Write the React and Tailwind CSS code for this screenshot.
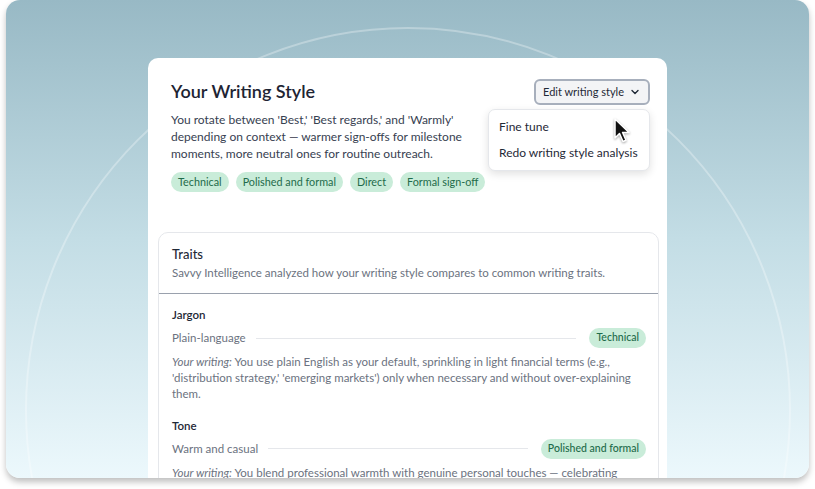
import React from 'react';

const font = { fontFamily: '"Lato", "Noto Sans", sans-serif' };

const tags = ['Technical', 'Polished and formal', 'Direct', 'Formal sign-off'];

const traits = [
    {
        name: 'Jargon',
        low: 'Plain-language',
        high: 'Technical',
        text: "You use plain English as your default, sprinkling in light financial terms (e.g., 'distribution strategy,' 'emerging markets') only when necessary and without over-explaining them.",
    },
    {
        name: 'Tone',
        low: 'Warm and casual',
        high: 'Polished and formal',
        text: 'You blend professional warmth with genuine personal touches — celebrating milestones and checking in on people as well as projects.',
    },
];

function Pointer() {
    return (
        <svg width="20" height="26" viewBox="0 0 20 26" className="drop-shadow-[0_1px_1px_rgba(0,0,0,0.35)]">
            <path d="M2 1 L2 20 L6.5 15.5 L10 23.5 L13 22.2 L9.6 14.4 L16 14.4 Z" fill="#111" stroke="#fff" strokeWidth="1.5" strokeLinejoin="round" />
        </svg>
    );
}

function Chevron() {
    return (
        <svg width="10" height="10" viewBox="0 0 10 10" fill="none">
            <path d="M2 3.5 L5 6.5 L8 3.5" stroke="#1f2937" strokeWidth="1.4" strokeLinecap="round" strokeLinejoin="round" />
        </svg>
    );
}

function TraitRow({ trait }) {
    return (
        <div className="pb-[16px]">
            <div className="text-[11.5px] font-semibold leading-[16px] text-[#1f2937]">{trait.name}</div>
            <div className="mt-[5px] flex items-center gap-[10px]">
                <span className="text-[11.5px] text-[#6b7280]">{trait.low}</span>
                <div className="h-px flex-1 bg-[#e5e7eb]" />
                <span className="ml-[3px] rounded-full bg-[#c9ecd9] px-[7px] py-[2px] text-[10.5px] font-medium text-[#1e6b4a]">
                    {trait.high}
                </span>
            </div>
            <p className="mt-[6px] text-[11.5px] leading-[16px] text-[#6b7280]">
                <em>Your writing:</em> {trait.text}
            </p>
        </div>
    );
}

export default function App() {
    return (
        <div className="h-[489px] w-[815px] bg-white" style={font}>
            <div className="relative mx-[6px] h-[478px] overflow-hidden rounded-[14px] bg-gradient-to-b from-[#98b9c5] via-[#c3dde5] to-[#ecf8fc] shadow-[0_4px_6px_rgba(0,0,0,0.25)]">
                {/* faint decorative ring */}
                <div className="pointer-events-none absolute left-[19px] top-[27px] h-[766px] w-[766px] rounded-full border-2 border-white/30" />

                <div className="relative mx-auto mt-[58px] h-[440px] w-[519px] overflow-hidden rounded-t-[10px] bg-white">
                    <div className="pl-[23px] pr-[17px] pt-[21px]">
                        <div className="flex items-start justify-between">
                            <h1 className="text-[18px] font-semibold leading-[24px] text-[#1e2433]">Your Writing Style</h1>
                            <div className="relative">
                                <button className="flex h-[26px] items-center gap-[6px] rounded-[6px] border-2 border-[#a7afbc] bg-[#f3f4f6] pl-[7px] pr-[8px] text-[11px] text-[#1f2937]">
                                    Edit writing style
                                    <Chevron />
                                </button>
                                <div className="absolute right-0 top-[30px] z-10 w-[162px] rounded-[7px] border border-[#e5e7eb] bg-white py-[4px] shadow-[0_3px_8px_rgba(0,0,0,0.12)]">
                                    <div className="flex h-[26px] items-center px-[10px] text-[12px] text-[#1f2937]">Fine tune</div>
                                    <div className="flex h-[26px] items-center px-[10px] text-[12px] text-[#1f2937]">Redo writing style analysis</div>
                                </div>
                                <div className="absolute left-[79px] top-[39px] z-20">
                                    <Pointer />
                                </div>
                            </div>
                        </div>
                        <p className="mt-[6px] w-[300px] text-[12px] leading-[17px] text-[#374151]">
                            You rotate between 'Best,' 'Best regards,' and 'Warmly' depending on context — warmer sign-offs for milestone moments, more neutral ones for routine outreach.
                        </p>
                        <div className="mt-[10px] flex gap-[7px]">
                            {tags.map((t) => (
                                <span key={t} className="rounded-full bg-[#c9ecd9] px-[7px] py-[2px] text-[10.8px] text-[#1e6b4a]">
                                    {t}
                                </span>
                            ))}
                        </div>
                    </div>

                    <div className="ml-[10px] mr-[8px] mt-[40px] rounded-[10px] border border-[#e5e7eb]">
                        <div className="border-b border-[#9aa1ad] px-[13px] pb-[12px] pt-[12px]">
                            <div className="text-[13px] font-medium leading-[18px] text-[#1f2937]">Traits</div>
                            <div className="mt-[2px] text-[11.5px] leading-[16px] text-[#6b7280]">
                                Savvy Intelligence analyzed how your writing style compares to common writing traits.
                            </div>
                        </div>
                        <div className="pl-[13px] pr-[12px] pt-[13px]">
                            {traits.map((t) => (
                                <TraitRow key={t.name} trait={t} />
                            ))}
                        </div>
                    </div>
                </div>
            </div>
        </div>
    );
}
